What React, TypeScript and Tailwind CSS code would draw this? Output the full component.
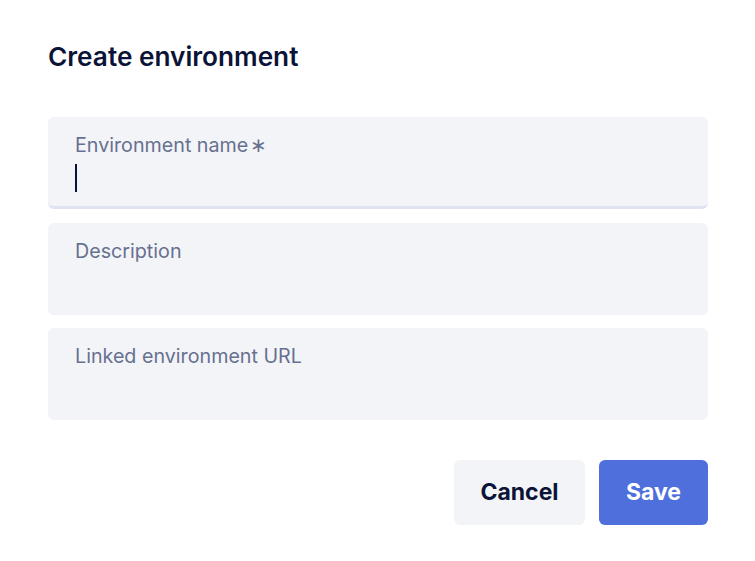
import React from "react";

function Field({ label, required, active }: { label: string; required?: boolean; active?: boolean }) {
  return (
    <div
      className={`h-[92px] rounded-[6px] bg-[#f3f4f7] px-[27px] pt-[15px] ${
        active ? "border-b-[3px] border-[#dfe3f3]" : ""
      }`}
    >
      <div className="text-[19.7px] leading-[26px] text-[#67708f]">
        {label}
        {required && <span className="ml-[2px]">∗</span>}
      </div>
      {active && <div className="mt-[6px] h-[28px] w-[2px] bg-[#0b1437]" />}
    </div>
  );
}

export default function App() {
  return (
    <div
      className="w-[755px] h-[561px] bg-white pl-[48px] pr-[47px] pt-[39px]"
      style={{ fontFamily: "Inter, 'Noto Sans', sans-serif" }}
    >
      <h1 className="text-[26.2px] leading-[36px] font-semibold text-[#0b1437]">
        Create environment
      </h1>
      <div className="mt-[42px] flex flex-col gap-[13.5px]">
        <Field label="Environment name" required active />
        <Field label="Description" />
        <Field label="Linked environment URL" />
      </div>
      <div className="mt-[40px] flex justify-end gap-[14px]">
        <button className="h-[65px] w-[131px] rounded-[6px] bg-[#f3f4f7] text-[23px] font-bold text-[#0b1437]">
          Cancel
        </button>
        <button className="h-[65px] w-[109px] rounded-[6px] bg-[#4f6fdc] text-[23px] font-bold text-white">
          Save
        </button>
      </div>
    </div>
  );
}
